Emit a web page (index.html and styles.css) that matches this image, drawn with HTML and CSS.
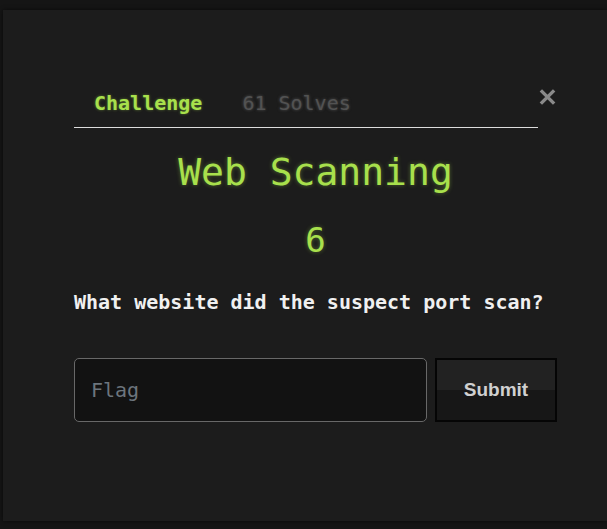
FILE: index.html
```html
<!DOCTYPE html>
<html>
<head>
<meta charset="utf-8">
<link rel="stylesheet" href="styles.css">
</head>
<body>
<div class="modal">
  <div class="header">
    <nav class="tabs">
      <span class="tab active">Challenge</span>
      <span class="tab muted">61 Solves</span>
    </nav>
    <button class="close" aria-label="Close">
      <svg width="20" height="20" viewBox="0 0 20 20"><path d="M3 3 L17 17 M17 3 L3 17" stroke="#8a8a8a" stroke-width="3.6" stroke-linecap="butt"/></svg>
    </button>
  </div>
  <h2 class="title">Web Scanning</h2>
  <h3 class="value">6</h3>
  <p class="question">What website did the suspect port scan?</p>
  <form class="flag-row">
    <input class="flag-input" type="text" placeholder="Flag">
    <button class="submit" type="button">Submit</button>
  </form>
</div>
</body>
</html>
```
FILE: styles.css
```css
html, body {
  margin: 0;
  padding: 0;
  background: #151515;
  overflow: hidden;
  height: 529px;
}
body {
  font-family: "DejaVu Sans Mono", "Liberation Mono", monospace;
}
.modal {
  box-sizing: border-box;
  margin: 10px 0 0 3px;
  width: 604px;
  height: 511px;
  background: #1c1c1c;
  box-shadow: 0 0 4px rgba(0,0,0,0.6);
  padding: 82px 0 0 71px;
}
.header {
  display: flex;
  align-items: flex-start;
  width: 483px;
}
.tabs {
  display: flex;
  width: 464px;
  border-bottom: 1px solid #dcdcdc;
  padding-bottom: 12px;
}
.tab {
  font-size: 20px;
  line-height: 23px;
  font-weight: bold;
  padding: 0 20px;
}
.tab.active {
  color: #a8e04c;
  text-shadow: 0 0 3px rgba(168,224,76,0.45);
}
.tab.muted {
  color: #525252;
  font-weight: normal;
  text-shadow: 0 0 3px rgba(120,120,120,0.6);
}
.close {
  background: none;
  border: none;
  padding: 0;
  margin: -5px 0 0 0;
  width: 19px;
  height: 20px;
  display: flex;
}
.title {
  margin: 22px 0 0 0;
  width: 483px;
  text-align: center;
  font-size: 38px;
  line-height: 44px;
  font-weight: normal;
  color: #a8e04c;
  text-shadow: 0 0 4px rgba(168,224,76,0.4);
}
.value {
  margin: 26px 0 0 0;
  width: 483px;
  text-align: center;
  font-size: 34px;
  line-height: 40px;
  font-weight: normal;
  color: #a8e04c;
  text-shadow: 0 0 4px rgba(168,224,76,0.4);
}
.question {
  margin: 31px 0 0 0;
  font-size: 20px;
  line-height: 23px;
  font-weight: bold;
  color: #f0f0f0;
}
.flag-row {
  display: flex;
  gap: 8px;
  margin: 44px 0 0 0;
  width: 483px;
}
.flag-input {
  box-sizing: border-box;
  width: 353px;
  height: 64px;
  background: #121212;
  border: 1px solid #686868;
  border-radius: 5px;
  padding: 0 16px;
  font-family: "DejaVu Sans Mono", "Liberation Mono", monospace;
  font-size: 20px;
  color: #ddd;
  outline: none;
}
.flag-input::placeholder {
  color: #6c757d;
}
.submit {
  box-sizing: border-box;
  width: 122px;
  height: 64px;
  border: 2px solid #050505;
  background: linear-gradient(#222222 0%, #222222 50%, #171717 50%, #171717 100%);
  color: #d0d0d0;
  font-family: "Liberation Sans", Arial, sans-serif;
  font-weight: bold;
  font-size: 19px;
  padding: 0;
}
```
